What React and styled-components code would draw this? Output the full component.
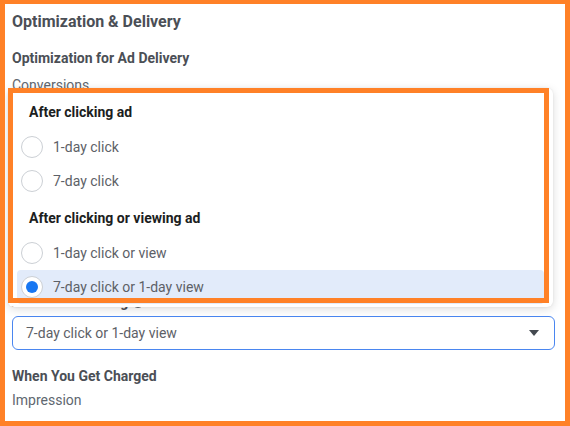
import React from "react";
import styled, { createGlobalStyle } from "styled-components";

const Global = createGlobalStyle`
  html, body { margin: 0; padding: 0; background: #fff; }
  body { font-family: Roboto, "Noto Sans", Arial, sans-serif; }
  * { box-sizing: border-box; }
`;

const ORANGE = "#ff8127";

const Frame = styled.div`
  width: 570px;
  height: 426px;
  border: 5px solid ${ORANGE};
  border-top-width: 4px;
  background: #fff;
  padding: 8px 10px 0 7px;
  display: flex;
  flex-direction: column;
  overflow: hidden;
`;

const Heading = styled.div`
  font-size: 16px;
  line-height: 20px;
  font-weight: 700;
  color: #4b4f56;
`;

const Label = styled.div`
  font-size: 14px;
  line-height: 20px;
  font-weight: 700;
  color: #4b4f56;
  margin-top: ${(p) => p.$mt || 0}px;
  display: flex;
  align-items: center;
  gap: 4px;
`;

const Value = styled.div`
  font-size: 14px;
  line-height: 20px;
  color: #606770;
  margin-top: ${(p) => p.$mt || 0}px;
`;

const FieldGroup = styled.div`
  position: relative;
  margin-top: 197px;
`;

const InfoIcon = styled.span`
  width: 12px;
  height: 12px;
  border-radius: 50%;
  background: #606770;
  color: #fff;
  font-size: 9px;
  line-height: 12px;
  text-align: center;
  font-weight: 700;
`;

const Select = styled.div`
  margin-top: 4px;
  height: 34px;
  border: 1px solid #4a86f0;
  border-radius: 6px;
  display: flex;
  align-items: center;
  justify-content: space-between;
  padding: 0 15px 0 13px;
  font-size: 14px;
  color: #5d6167;
`;

const Caret = styled.span`
  width: 0;
  height: 0;
  border-left: 5.5px solid transparent;
  border-right: 5.5px solid transparent;
  border-top: 6px solid #444950;
`;

const Menu = styled.div`
  position: absolute;
  left: -4px;
  bottom: calc(100% - 15px);
  width: 545px;
  background: #fff;
  border-radius: 6px;
  box-shadow: 0 2px 10px rgba(0, 0, 0, 0.14), 0 0 2px rgba(0, 0, 0, 0.08);
  padding: 7px 9px 3px;
  display: flex;
  flex-direction: column;
  gap: 3px;
  z-index: 2;
`;

const Annotation = styled.div`
  position: absolute;
  left: 0;
  top: 0;
  width: 541px;
  height: 215px;
  border: 5px solid ${ORANGE};
  pointer-events: none;
`;

const Group = styled.div`
  display: flex;
  flex-direction: column;
`;

const GroupTitle = styled.div`
  height: 34px;
  margin-bottom: 1px;
  display: flex;
  align-items: center;
  padding-left: 12px;
  font-size: 14px;
  font-weight: 700;
  color: #1c1e21;
`;

const Option = styled.div`
  height: 34px;
  display: flex;
  align-items: center;
  gap: 10px;
  padding-left: 4px;
  border-radius: 4px;
  background: ${(p) => (p.$selected ? "#e2ebfa" : "transparent")};
  font-size: 14px;
  color: #5d6167;
`;

const Radio = styled.span`
  width: 22px;
  height: 22px;
  border-radius: 50%;
  border: 1px solid #ccd0d5;
  background: #fff;
  display: flex;
  align-items: center;
  justify-content: center;
  flex: none;
  &::after {
    content: "";
    width: 12px;
    height: 12px;
    border-radius: 50%;
    background: ${(p) => (p.$checked ? "#1877f2" : "transparent")};
  }
`;

const groups = [
  { title: "After clicking ad", options: ["1-day click", "7-day click"] },
  {
    title: "After clicking or viewing ad",
    options: ["1-day click or view", "7-day click or 1-day view"],
  },
];

const selected = "7-day click or 1-day view";

export default function App() {
  return (
    <>
      <Global />
      <Frame>
        <Heading>Optimization &amp; Delivery</Heading>
        <Label $mt={16}>Optimization for Ad Delivery</Label>
        <Value $mt={7}>Conversions</Value>
        <FieldGroup>
          <Label>
            Attribution Setting <InfoIcon>i</InfoIcon>
          </Label>
          <Select>
            <span>{selected}</span>
            <Caret />
          </Select>
          <Menu>
            {groups.map((g) => (
              <Group key={g.title}>
                <GroupTitle>{g.title}</GroupTitle>
                {g.options.map((o) => (
                  <Option key={o} $selected={o === selected}>
                    <Radio $checked={o === selected} />
                    {o}
                  </Option>
                ))}
              </Group>
            ))}
            <Annotation />
          </Menu>
        </FieldGroup>
        <Label $mt={16}>When You Get Charged</Label>
        <Value $mt={4}>Impression</Value>
      </Frame>
    </>
  );
}
